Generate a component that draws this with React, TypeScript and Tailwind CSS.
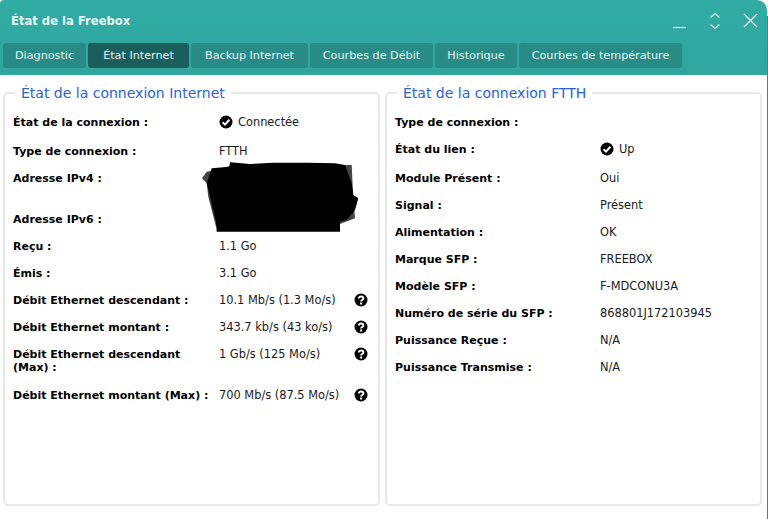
import React from "react";

function CheckIcon() {
  return (
    <svg width="14" height="14" viewBox="0 0 14 14" className="shrink-0">
      <circle cx="7" cy="7" r="6.5" fill="#000" />
      <path d="M3.6 7.2 L6 9.6 L10.4 4.8" fill="none" stroke="#fff" strokeWidth="2" />
    </svg>
  );
}

function HelpIcon() {
  return (
    <svg width="14" height="14" viewBox="0 0 14 14" className="shrink-0">
      <circle cx="7" cy="7" r="6.5" fill="#000" />
      <path d="M4.8 5.4 C4.8 2.8 9.4 2.8 9.4 5.4 C9.4 7.1 7.1 6.9 7.1 8.4" fill="none" stroke="#fff" strokeWidth="1.9" />
      <rect x="6.1" y="9.5" width="2" height="2" fill="#fff" />
    </svg>
  );
}

function Row({ label, value, check, help, h = 27, right }: { label: string; value?: string; check?: boolean; help?: boolean; h?: number; right?: boolean }) {
  return (
    <div className="flex items-start" style={{ minHeight: h }}>
      <div className={`${right ? "w-[205px]" : "w-[206px]"} shrink-0 pr-1 font-bold text-[11px] leading-[13px] pt-[1px]`}>{label}</div>
      <div className="flex items-center gap-[5px] leading-[14px] text-[11.4px] flex-1 whitespace-nowrap text-[#1a1a1a]">
        {check && <CheckIcon />}
        {value}
      </div>
      {help && <div className="w-[16px] shrink-0"><HelpIcon /></div>}
    </div>
  );
}

function Panel({ title, className, legend, children }: { title: string; className: string; legend: string; children: React.ReactNode }) {
  return (
    <fieldset className={`border-2 border-[#e8e8e8] rounded-[5px] min-w-0 h-[423px] px-[8px] pt-[13px] ${className}`}>
      <legend className={`px-[6px] pt-[2px] text-[14px] leading-[17px] text-[#2b5fe0] ${legend}`}>{title}</legend>
      {children}
    </fieldset>
  );
}

const tabs = [
  { t: "Diagnostic", w: "w-[83px]" },
  { t: "État Internet", w: "w-[101px]" },
  { t: "Backup Internet", w: "w-[117px]" },
  { t: "Courbes de Débit", w: "w-[123px]" },
  { t: "Historique", w: "w-[82px]" },
  { t: "Courbes de température", w: "w-[163px]" },
];

export default function App() {
  return (
    <div className="w-[768px] h-[519px] bg-white overflow-hidden flex text-black font-['DejaVu_Sans',sans-serif]">
      <div className="w-[767px] shrink-0">
        <div className="h-[75px] rounded-tr-[10px] rounded-tl-[4px] bg-gradient-to-b from-[#30aca5] to-[#2fa59e] text-white flex flex-col">
          <div className="h-[43px] flex items-start justify-between">
            <div className="pl-[11px] pt-[14px] text-[11.6px] leading-[15px] font-bold text-[#e8f6f5]">État de la Freebox</div>
            <div className="flex items-start pt-[11px] pr-[8px] gap-[20px]">
              <svg width="16" height="20" viewBox="0 0 16 20"><path d="M1 16.5H14" stroke="#e8f6f5" strokeWidth="1.2" /></svg>
              <svg width="14" height="20" viewBox="0 0 14 20" fill="none" stroke="#d5eeec" strokeWidth="1.2"><path d="M2.5 6.5L7 2.5L11.5 6.5" /><path d="M2.5 13.5L7 17.5L11.5 13.5" /></svg>
              <svg width="17" height="20" viewBox="0 0 17 20" fill="none" stroke="#e8f6f5" strokeWidth="1.4"><path d="M2 3L15 16M15 3L2 16" /></svg>
            </div>
          </div>
          <div className="flex gap-[2px] pl-[3px]">
            {tabs.map(({ t, w }, i) => (
              <div key={t} className={`h-[25px] ${w} pt-[1px] rounded-[3px] flex items-center justify-center whitespace-nowrap text-[11.2px] ${i === 1 ? "bg-[#1a5f5b]" : "bg-[#298b85]"} text-[#e4f3f2]`}>{t}</div>
            ))}
          </div>
        </div>
        <div className="flex gap-[5px] pl-[3px] pt-[8px]">
          <Panel title="État de la connexion Internet" className="w-[377px]" legend="ml-[2px]">
            <Row label="État de la connexion :" value="Connectée" check h={29} />
            <Row label="Type de connexion :" value="FTTH" />
            <div className="relative">
              <Row label="Adresse IPv4 :" h={41} />
              <Row label="Adresse IPv6 :" />
              <svg className="absolute left-[187px] top-[-11px]" width="160" height="74" viewBox="0 0 160 74">
                <path d="M2 18.3L6.7 11.7L11.7 10.7L30 6L151.7 5L153 33L155 58.3L140 64L16 66.7L8.3 36.7L6.7 23.3Z" fill="#444" />
                <path d="M11.7 8.3L29.3 6.7L30 2.3L50 4L73.3 2.7L106.7 2.7L135 3.3L145 5L151.7 23.3L153.3 35L158.3 38.3L155 50L146.7 60L140 61.7L140 71.7L103 71.7L70 71.7L16.7 71.7L16 61.7L10 36.7L6.7 23.3Z" fill="#000" />
              </svg>
            </div>
            <Row label="Reçu :" value="1.1 Go" />
            <Row label="Émis :" value="3.1 Go" />
            <Row label="Débit Ethernet descendant :" value="10.1 Mb/s (1.3 Mo/s)" help />
            <Row label="Débit Ethernet montant :" value="343.7 kb/s (43 ko/s)" help />
            <Row label="Débit Ethernet descendant (Max) :" value="1 Gb/s (125 Mo/s)" help h={41} />
            <Row label="Débit Ethernet montant (Max) :" value="700 Mb/s (87.5 Mo/s)" help />
          </Panel>
          <Panel title="État de la connexion FTTH" className="w-[377px]" legend="ml-[2px]">
            <Row right label="Type de connexion :" h={27} />
            <Row right label="État du lien :" value="Up" check h={29} />
            <Row right label="Module Présent :" value="Oui" />
            <Row right label="Signal :" value="Présent" />
            <Row right label="Alimentation :" value="OK" />
            <Row right label="Marque SFP :" value="FREEBOX" />
            <Row right label="Modèle SFP :" value="F-MDCONU3A" />
            <Row right label="Numéro de série du SFP :" value="868801J172103945" />
            <Row right label="Puissance Reçue :" value="N/A" />
            <Row right label="Puissance Transmise :" value="N/A" />
          </Panel>
        </div>
      </div>
      <div className="w-[1px] shrink-0 mt-[16px] bg-[#5a74a8]" />
    </div>
  );
}
